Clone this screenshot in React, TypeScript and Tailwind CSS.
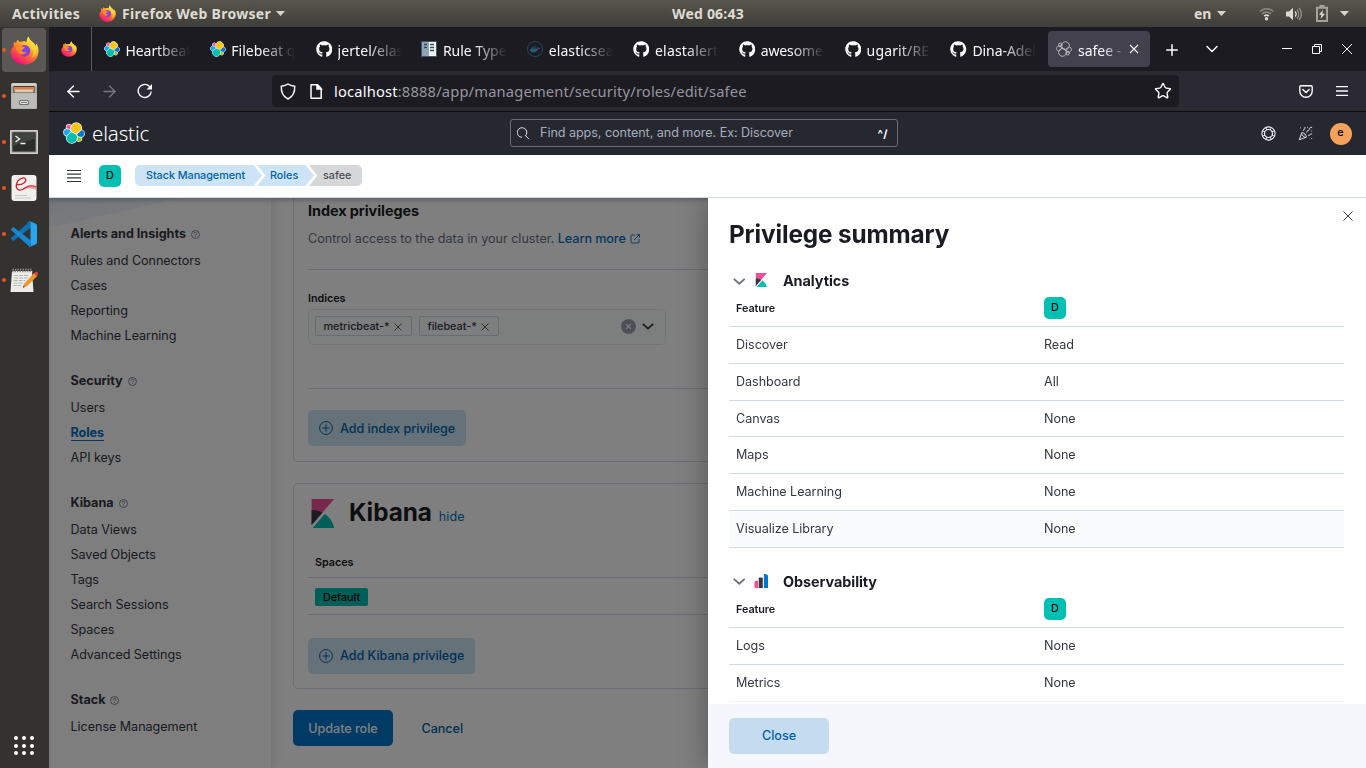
import React from "react";
import { FaGithub, FaDocker } from "react-icons/fa";
import {
  ArrowLeft, ArrowRight, Star, Plus, ChevronDown, PartyPopper,
} from "lucide-react";

const ubuntu = "font-['Noto_Sans',sans-serif]";

function Firefox({ size, id }: { size: number; id: string }) {
  return (
    <svg width={size} height={size} viewBox="0 0 32 32" className="shrink-0">
      <defs>
        <linearGradient id={id + "a"} x1="0.85" y1="0.1" x2="0.3" y2="0.95">
          <stop offset="0" stopColor="#fff44f" />
          <stop offset="0.3" stopColor="#ffc02a" />
          <stop offset="0.6" stopColor="#ff6a34" />
          <stop offset="1" stopColor="#f0127a" />
        </linearGradient>
        <radialGradient id={id + "b"} cx="0.5" cy="0.4" r="0.6">
          <stop offset="0" stopColor="#6f4ff0" />
          <stop offset="0.7" stopColor="#8a3fd0" />
          <stop offset="1" stopColor="#c0349c" />
        </radialGradient>
      </defs>
      <path
        d="M20.500.5c-1.600 2-2.300 4-1.800 6-2-.9-5-1-7.200.2-1.300-.6-2.300-1.500-2.700-2.700-1.200.8-2 2.200-2.100 3.700-.9-.3-1.600-.9-2-1.700-1 2.200-1 4-.6 5.400C1.900 13.600.6 16.200.6 18.300.9 26 7.600 31.500 16 31.500c8.600 0 15.500-6.200 15.500-15 0-3.500-1-6.500-2.900-8.600.2 1.300.1 2.400-.2 3.300C26.900 6.400 21.500 5.800 20.500.5z"
        fill={`url(#${id}a)`}
      />
      <circle cx="16" cy="16.500" r="6.500" fill={`url(#${id}b)`} />
      <path d="M6.500 10.500c3-1.300 5.500-.5 7 1.300 1.300.1 3 .1 3 .9-.5 1.400-3.200 1.700-3.500 3 .2 1.900 2.800 2.800 5.500 1.900-1.700 3.200-6.500 3.700-9.300.8C7 16 6 13 6.500 10.500z" fill="#ff8a2a" />
      <path d="M20.500.5c-1.600 2-2.300 4-1.800 6.200 3 1.800 5.300 5 5 9.300 1.300-.7 1.800-1.600 2-2.400 1.200 4.500 0 8.400-2.200 11 4-2 6.300-6 5.500-12.400C27 6.600 21.500 5.800 20.500.5z" fill="#ffd83c" opacity="0.75" />
    </svg>
  );
}

const elasticPaths: [string, string][] = [
  ["#FEC514", "M12.58 13.787l7.002 3.211 7.066-6.213a7.849 7.849 0 00.152-1.557c0-4.287-3.464-7.774-7.72-7.774-2.548 0-4.917 1.27-6.357 3.39l-1.176 6.13 1.033 2.813z"],
  ["#00BFB3", "M5.333 21.228a7.964 7.964 0 00-.152 1.57c0 4.3 3.486 7.8 7.762 7.8a7.738 7.738 0 006.394-3.404l1.167-6.118-1.556-2.992-7.03-3.222-6.585 6.366z"],
  ["#F04E98", "M5.288 9.067l4.8 1.142L11.14 4.72a3.79 3.79 0 00-2.306-.784 3.818 3.818 0 00-3.803 3.831c0 .45.09.89.257 1.3z"],
  ["#1BA9F5", "M4.872 10.214c-2.145.716-3.646 2.795-3.646 5.057 0 2.204 1.357 4.17 3.394 4.951l6.735-6.124-1.236-2.657-5.247-1.227z"],
  ["#93C90E", "M20.873 27.194a3.76 3.76 0 002.287.783 3.818 3.818 0 003.802-3.832 3.83 3.83 0 00-.253-1.297l-4.794-1.127-1.042 5.473z"],
  ["#0077CC", "M21.848 20.563l5.28 1.238c2.144-.715 3.646-2.795 3.646-5.058 0-2.2-1.36-4.163-3.4-4.942l-6.905 6.072 1.379 2.69z"],
];

function ElasticLogo({ size, outline = false }: { size: number; outline?: boolean }) {
  return (
    <svg width={size} height={size} viewBox="0 0 32 32" className="shrink-0">
      {!outline && elasticPaths.map(([, d]) => <path key={d} d={d} fill="#fff" stroke="#fff" strokeWidth="2" />)}
      {elasticPaths.map(([c, d]) => (
        <path key={d} d={d} fill={outline ? "none" : c} stroke={outline ? "#d8d8de" : "none"} strokeWidth="1.500" />
      ))}
    </svg>
  );
}

function KibanaLogo({ size }: { size: number }) {
  return (
    <svg width={size} height={size} viewBox="0 0 32 32" className="shrink-0">
      <path fill="#F04E98" d="M4 0v28.789L28.935.017z" />
      <path fill="#343741" d="M4 12v16.789l12.007-13.853C12.451 13.063 8.355 12 4 12" />
      <path fill="#00BFB3" d="M18.479 16.664L6.268 30.755 5.161 32h23.772c-1.305-6.261-5.118-11.648-10.454-15.336" />
    </svg>
  );
}

function ObservabilityLogo() {
  return (
    <svg width="14.400" height="14.400" viewBox="0 0 32 32" className="shrink-0">
      <path fill="#F04E98" d="M1 19v9a4 4 0 004 4h4V15H5a4 4 0 00-4 4z" />
      <path fill="#343741" d="M10.500 8h9v24h-9z" />
      <path fill="#0077CC" d="M22 32h10V8a8 8 0 00-8-8h-2z" />
    </svg>
  );
}

const Caret = () => (
  <svg width="9" height="5" viewBox="0 0 9 5" className="shrink-0"><path d="M0 0h9L4.500 5z" fill="#d8d5cd" /></svg>
);

function TopBar() {
  return (
    <header className={`${ubuntu} flex h-[27px] shrink-0 items-center bg-linear-to-b from-[#58554c] to-[#3f3e39] pl-3 text-[14px] leading-[27px] font-bold text-[#dfdbd2]`}>
      <span className="w-[87px] tracking-[0.300px]">Activities</span>
      <Firefox size={17} id="ft" />
      <span className="ml-[6px] w-[150px] tracking-[0.300px] whitespace-nowrap">Firefox Web Browser</span>
      <span className="ml-[4px]"><Caret /></span>
      <span className="ml-[387px] w-[73px] tracking-[0.200px] whitespace-nowrap">Wed 06:43</span>
      <span className="ml-[449px] w-[18px]">en</span>
      <span className="ml-[5px]"><Caret /></span>
      <svg className="ml-[33px]" width="15" height="14" viewBox="0 0 15 14" fill="none" strokeWidth="1.700">
        <path d="M.8 4.500C4.600.8 10.400.8 14.200 4.500M3 7c2.600-2.500 6.400-2.500 9 0" stroke="#8d8b84" />
        <path d="M5.200 9.200c1.400-1.200 3.200-1.200 4.600 0" stroke="#dfdbd2" />
        <circle cx="7.500" cy="11.800" r="1.700" fill="#dfdbd2" />
      </svg>
      <svg className="ml-[12px]" width="16" height="14" viewBox="0 0 16 14" fill="none">
        <path d="M0 4.500h3L7 .8v12.400L3 9.500H0z" fill="#dfdbd2" />
        <path d="M9 4.500c1.300 1.400 1.300 3.600 0 5" stroke="#dfdbd2" strokeWidth="1.300" />
        <path d="M11 2.700c2.300 2.500 2.300 6.100 0 8.600M13 1c3.200 3.500 3.200 8.500 0 12" stroke="#8d8b84" strokeWidth="1.400" />
      </svg>
      <svg className="ml-[14px]" width="12" height="17" viewBox="0 0 12 17">
        <path d="M1 2.700h10V16H1z" fill="none" stroke="#a5a29a" strokeWidth="2" />
        <path d="M3.500 0h5v3h-5z" fill="#a5a29a" />
        <path d="M6.800 5L3 9.700h2.400L4.600 14 9 8.700H6.500z" fill="#dfdbd2" />
      </svg>
      <span className="ml-[12px]"><Caret /></span>
    </header>
  );
}

function FilesIcon() {
  return (
    <svg width="28" height="28" viewBox="0 0 28 28">
      <rect x="1" y="1" width="26" height="26" rx="1.500" fill="#a7a7a5" />
      <path d="M1 4l1.500-3h23L27 4z" fill="#cfcfcd" />
      <rect x="3.500" y="4" width="21" height="7" fill="#4a3a31" />
      <rect x="4" y="5" width="20" height="3" fill="#e07c45" />
      <rect x="4.500" y="7.500" width="19" height="3" fill="#d9cbb4" />
      <rect x="1.500" y="11" width="25" height="15.500" fill="#bcbcba" />
      <rect x="9" y="18" width="10" height="5" rx="1.500" fill="#6c6c6a" />
      <rect x="10" y="19" width="8" height="3" rx="1" fill="#e3e3e1" />
      <rect x="11" y="20" width="6" height="1" fill="#777" />
    </svg>
  );
}
function TerminalIcon() {
  return (
    <svg width="28" height="24" viewBox="0 0 28 24">
      <rect x="0" y="0" width="28" height="24" rx="1" fill="#d0d0ce" />
      <rect x="1.500" y="1.500" width="25" height="21" fill="#8e8e8c" />
      <rect x="2.500" y="2.500" width="23" height="19" fill="#2b2d2b" />
      <path d="M2.500 2.500h23v6L2.500 16z" fill="#40433f" />
      <path d="M5.500 6l4 3-4 3M10.500 13.500h5" stroke="#f1f1f1" strokeWidth="1.300" fill="none" />
    </svg>
  );
}
function ReaderIcon() {
  return (
    <svg width="26" height="28" viewBox="0 0 26 28">
      <rect x="0.500" y="1" width="25" height="26" rx="3" fill="#efefed" />
      <path d="M4 21.500h12M4 24h16" stroke="#c9c9c7" strokeWidth="1" />
      <path d="M5.500 10.500C11 11.500 16 8 14.500 5 13 2.500 7 4.500 5.500 10c-1.200 4.800 2 7.600 6.500 5.200 3.500-2 6-4.600 13.500-2.400" stroke="#cf2027" strokeWidth="1.200" fill="none" />
      <path d="M14 14.500c3-2.600 7-4 11.500-2.400v4c-3.500-1.800-7-2.400-11.500-1.600z" fill="#e2686b" opacity="0.600" />
    </svg>
  );
}
function CodeIcon() {
  return (
    <svg width="26" height="26" viewBox="0 0 26 26">
      <path d="M18.800 0L20 6.500 3 19.500c-.5.400-1 .3-1.500 0L.4 18.300c-.5-.5-.5-1.200 0-1.600z" fill="#0f70b3" />
      <path d="M18.800 26L20 19.500 3 6.500c-.5-.4-1-.3-1.500 0L.4 7.700c-.5.500-.5 1.200 0 1.600z" fill="#1a86cf" />
      <path d="M18.800 26c-.6.100-.9-.1-1.200-.4.800.6 1.900.1 1.900-.9V1.300c0-1-1.100-1.500-1.900-.8.400-.5 1-.6 1.600-.3l5.600 2.600c.7.300 1.200 1 1.200 1.700v17c0 .8-.5 1.400-1.200 1.800z" fill="#27a5f2" />
    </svg>
  );
}
function EditorIcon() {
  return (
    <svg width="28" height="25" viewBox="0 0 28 25">
      <path d="M2 3h20l1.500 21H.5z" fill="#ececea" />
      <path d="M2.500 1.500H22M2 3.500h20.500" stroke="#8d8d8b" strokeWidth="1.500" strokeDasharray="1.500 1" />
      <path d="M4 7.500h15M4 10h14M3.500 12.500h12M3.500 15h10M3 17.500h8" stroke="#b5b5b3" strokeWidth="1" strokeDasharray="4 1" />
      <path d="M24 5l3.500 2.800L17 18.200l-4 1.500 1-3.700z" fill="#f0952c" />
      <path d="M24 5l1.500-1.300c1.500-.3 2.800 1 2.400 2.500L26.700 8.500z" fill="#e23b3b" />
      <path d="M13 19.700l.6-1.900 1.300 1z" fill="#333" />
    </svg>
  );
}

function Dock() {
  const items = [<FilesIcon />, <TerminalIcon />, <ReaderIcon />, <CodeIcon />, <EditorIcon />];
  return (
    <nav className="flex w-[49px] shrink-0 flex-col bg-[#33322e]">
      <div className="flex h-[46px] items-center pl-[2px]">
        <div className="flex h-[44px] w-[44px] items-center rounded-[4px] bg-[#595854]">
          <span className="mr-[4px] h-1 w-1 shrink-0 rounded-full bg-[#e95420]" />
          <Firefox size={29} id="fd" />
        </div>
      </div>
      {items.map((icon, i) => (
        <div key={i} className="flex h-[46px] items-center pl-[2px]">
          <span className="h-1 w-1 rounded-full bg-[#e95420]" />
          <span className="flex w-[36px] justify-center">{icon}</span>
        </div>
      ))}
      <div className="mt-auto mb-[13px] ml-[14px] grid w-[20px] grid-cols-3 gap-[3.500px]">
        {Array.from({ length: 9 }, (_, i) => <span key={i} className="h-[4px] w-[4px] rounded-full bg-white" />)}
      </div>
    </nav>
  );
}

const RuleIcon = () => (
  <svg width="16" height="16" viewBox="0 0 16 16" className="shrink-0">
    <path d="M0 0h16v16H0z" fill="#3f5866" />
    <path d="M1 1h6v14H1z" fill="#8ca6b5" /><path d="M7.500 1H15v14H7.500z" fill="#f3f6f8" />
    <path d="M3 3.500h3M3 6.500h3M9 3.500h4M9 6.500h4M9 9.500h4" stroke="#34495a" strokeWidth="1.500" />
  </svg>
);
const DockerIcon = () => (
  <span className="flex h-4 w-4 shrink-0 items-center justify-center rounded-full border border-[#234a5e]">
    <FaDocker size={10} color="#2a5a74" />
  </span>
);
const Gh = () => <FaGithub size={16.500} color="#fff" className="shrink-0" />;

const tabs: [React.ReactNode, string, string][] = [
  [<ElasticLogo size={16} />, "Heartbeat", "tracking-[-0.080px]"],
  [<ElasticLogo size={16} />, "Filebeat q", "tracking-[0px]"],
  [<Gh />, "jertel/elas", "tracking-[0.060px]"],
  [<RuleIcon />, "Rule Type", "tracking-[0px]"],
  [<DockerIcon />, "elasticsea", "tracking-[0.100px]"],
  [<Gh />, "elastalert", "tracking-[0.200px]"],
  [<Gh />, "awesome-", "tracking-[-0.150px]"],
  [<Gh />, "ugarit/RE", "tracking-[0.150px]"],
  [<Gh />, "Dina-Adel", "tracking-[-0.060px]"],
];

function TabStrip() {
  return (
    <div className={`${ubuntu} flex h-[44px] shrink-0 items-center bg-[#1c1b22] text-[14px] text-[#fbfbfe]`}>
      <div className="flex h-full w-[43px] items-center justify-center border-r border-[#5b5a63] pr-[2px]">
        <Firefox size={16} id="fp" />
      </div>
      <div className="w-[2px]" />
      {tabs.map(([icon, t, tracking]) => (
        <div key={t} className="flex w-[105.800px] shrink-0 items-center pl-[10px]">
          {icon}
          <span className={`relative top-[1px] ml-[5.500px] w-[66px] whitespace-nowrap [mask-image:linear-gradient(to_right,#000_45%,transparent_97%)] ${tracking}`}>{t}</span>
        </div>
      ))}
      <div className="ml-[1.800px] flex h-9 w-[102px] shrink-0 items-center rounded-[4px] bg-[#42414d] pl-2">
        <ElasticLogo size={16} outline />
        <span className="relative top-[1px] ml-[6px] w-[49px] whitespace-nowrap [mask-image:linear-gradient(to_right,#000_50%,transparent)]">safee -</span>
        <svg width="10" height="10" viewBox="0 0 10 10" className="ml-[2px]"><path d="M1 1l8 8M9 1L1 9" stroke="#fbfbfe" strokeWidth="1.100" /></svg>
      </div>
      <Plus size={18} strokeWidth={2} className="mt-[1px] ml-[13px] shrink-0" />
      <ChevronDown size={20} strokeWidth={1.700} className="ml-[21px] shrink-0" />
      <svg className="ml-[60px] shrink-0" width="72" height="12" viewBox="0 0 72 12" fill="none" stroke="#fbfbfe" strokeWidth="1">
        <path d="M0 5.500h10M30.500 3.500h7v7h-7zM32.500 3.500v-2h7v7h-2M60 1l10 10M70 1L60 11" />
      </svg>
    </div>
  );
}

function UrlBar() {
  return (
    <div className={`${ubuntu} flex h-[41px] shrink-0 items-center border-b border-[#0c0c0d] bg-[#2b2a33] text-[#fbfbfe]`}>
      <ArrowLeft size={19} strokeWidth={1.700} className="ml-[14.500px]" />
      <ArrowRight size={19} strokeWidth={1.700} className="ml-[17px] text-[#77767e]" />
      <svg width="16" height="16" viewBox="0 0 16 16" className="ml-[18.500px]" fill="none" stroke="#fbfbfe" strokeWidth="1.400">
        <path d="M14.200 8.500A6.500 6.500 0 1112.500 3.500l1.500 1.500" /><path d="M15 1v5.500H9.500z" fill="#fbfbfe" stroke="none" />
      </svg>
      <div className="ml-[119px] flex h-[32px] w-[907px] items-center rounded-[4px] bg-[#1c1b22]">
        <svg className="ml-[8px]" width="16" height="17" viewBox="0 0 16 17" fill="none" stroke="#fbfbfe" strokeWidth="1.400">
          <path d="M8 1C6 2.500 3.500 3 1.300 3.200 1 8.500 3 13.500 8 16c5-2.500 7-7.500 6.700-12.800C12.500 3 10 2.500 8 1z" />
        </svg>
        <svg className="ml-[13px]" width="14" height="15" viewBox="0 0 14 15" fill="none" stroke="#fbfbfe" strokeWidth="1.500">
          <path d="M2 .8h6.500l3.700 3.700v9.700H2z" strokeLinejoin="round" /><path d="M8 1v4h4z" fill="#fbfbfe" />
        </svg>
        <span className="ml-[11px] flex-1 text-[14.700px] tracking-[0.180px] whitespace-nowrap text-[#97969f]">
          <span className="text-[#fbfbfe]">localhost</span>:8888/app/management/security/roles/edit/safee
        </span>
        <Star size={18} strokeWidth={1.900} className="mr-[7px]" />
      </div>
      <svg className="ml-[120px]" width="14" height="13" viewBox="0 0 14 13" fill="none" stroke="#fbfbfe" strokeWidth="1.400">
        <path d="M2 .8h10c.7 0 1.200.5 1.200 1.200V6A6.200 6.200 0 01.8 6V2C.8 1.300 1.300.8 2 .8z" /><path d="M3.800 4.500L7 7.500l3.200-3" strokeLinecap="round" />
      </svg>
      <svg className="ml-[23px]" width="12" height="10" viewBox="0 0 12 10"><path d="M0 .7h12M0 5h12M0 9.300h12" stroke="#fbfbfe" strokeWidth="1.300" /></svg>
    </div>
  );
}

function KibanaHeader() {
  return (
    <div className="flex h-[43px] shrink-0 items-center bg-[#25282f]">
      <span className="ml-[14px] pb-[1px]"><ElasticLogo size={22} /></span>
      <span className="ml-[7px] w-[60px] pb-[2px] font-['Noto_Sans',sans-serif] text-[20.500px] leading-[28px] font-light tracking-[-0.150px] text-white">elastic</span>
      <div className="mb-[1px] ml-[358px] flex h-[28px] w-[388px] items-center rounded-[3px] border border-[#696c72]">
        <svg className="ml-[6px] shrink-0" width="13" height="13" viewBox="0 0 13 13" fill="none" stroke="#dfe5ef" strokeWidth="1">
          <path d="M5 10.300a4.800 4.800 0 11 3.200-1.200M8.500 8.700l3.500 3.500" />
        </svg>
        <span className="ml-[10px] flex-1 text-[12.600px] tracking-[-0.050px] text-[#a5adbc]">Find apps, content, and more. Ex: Discover</span>
        <span className="mt-[2px] mr-[9px] text-[11px] font-bold tracking-[0.500px] text-white">^/</span>
      </div>
      <svg width="15" height="15" viewBox="0 0 15 15" className="ml-[363px]" fill="none" stroke="#eef1f6">
        <circle cx="7.500" cy="7.500" r="6.600" strokeWidth="1.100" /><circle cx="7.500" cy="7.500" r="4" strokeWidth="1.100" />
        <path d="M2 5l2.200.8M5 2l.8 2.200M13 5l-2.200.8M10 2l-.8 2.200M2 10l2.200-.8M5 13l.8-2.200M13 10l-2.200-.8M10 13l-.8-2.200" />
      </svg>
      <PartyPopper size={15} strokeWidth={1.600} className="ml-[22px] text-[#dfe5ef]" />
      <span className="ml-[16.500px] flex h-[22px] w-[22px] items-center justify-center rounded-full bg-[#f5a35c] text-[10.800px] font-medium text-black">e</span>
    </div>
  );
}

const SpaceBadge = () => (
  <span className="flex h-[22px] w-[21.600px] shrink-0 items-center justify-center rounded-[5px] bg-[#00bfb3] pt-[1px] text-[10.800px] font-medium text-black">D</span>
);

function Breadcrumbs() {
  return (
    <div className="flex h-[43px] shrink-0 items-center border-b border-[#d3dae6] bg-white">
      <svg className="ml-[18px]" width="14" height="12" viewBox="0 0 14 12"><path d="M0 .5h14M0 4.200h14M0 7.800h14M0 11.500h14" stroke="#343741" strokeWidth="1.200" /></svg>
      <span className="ml-[18px]"><SpaceBadge /></span>
      <div className="mb-[1px] ml-[14.400px] flex h-[21px] text-[10.800px] leading-[21px] font-medium">
        <span className="w-[127px] rounded-l-[5px] bg-[#cce4f5] pl-[11px] tracking-[-0.040px] text-[#0061a6] [clip-path:polygon(0_0,118.500px_0,100%_50%,118.500px_100%,0_100%)]">Stack Management</span>
        <span className="-ml-[5px] w-[57px] bg-[#cce4f5] pl-[13px] text-[#0061a6] [clip-path:polygon(0_0,48.500px_0,100%_50%,48.500px_100%,0_100%,8.500px_50%)]">Roles</span>
        <span className="-ml-[5px] w-[53px] rounded-r-[5px] bg-[#d6d7d9] pl-[14px] text-[#4a4d56] [clip-path:polygon(0_0,100%_0,100%_100%,0_100%,8.500px_50%)]">safee</span>
      </div>
    </div>
  );
}

const sections: [string, string[]][] = [
  ["Alerts and Insights", ["Rules and Connectors", "Cases", "Reporting", "Machine Learning"]],
  ["Security", ["Users", "Roles", "API keys"]],
  ["Kibana", ["Data Views", "Saved Objects", "Tags", "Search Sessions", "Spaces", "Advanced Settings"]],
  ["Stack", ["License Management"]],
];

function Sidebar() {
  return (
    <aside className="relative w-[223px] shrink-0 border-r border-[#eceef3] bg-[#fcfcfd] pt-[24px] pl-[21.500px] text-[12.600px] tracking-[-0.050px] shadow-[0_0_12px_rgba(0,0,0,0.15)]">
      <svg className="absolute top-0 left-0" width="140" height="32" viewBox="0 0 140 32"><path d="M0 0h131L0 30z" fill="#f1f3fa" /><path d="M0 0h80L0 14z" fill="#ebeef8" /></svg>
      {sections.map(([title, links]) => (
        <div key={title} className="relative mb-5">
          <div className="mb-[2px] flex h-[25px] items-center font-bold tracking-[0px] text-[#343741]">
            {title}
            <svg className="mb-[1px] ml-[5px]" width="9" height="9" viewBox="0 0 9 9" fill="none" stroke="#69707d" strokeWidth="0.800">
              <circle cx="4.500" cy="4.500" r="4" /><path d="M3.200 3.500c0-1.700 2.600-1.500 2.600 0 0 .9-1.300.9-1.300 1.900M4.500 6.200v.8" />
            </svg>
          </div>
          {links.map((l) => (
            <div key={l} className="flex h-[25px] items-center">
              {l === "Roles"
                ? <span className="-mt-[1px] border-b border-[#0071c2] leading-[15px] font-bold text-[#0071c2]">{l}</span>
                : <span className="text-[#343741]">{l}</span>}
            </div>
          ))}
        </div>
      ))}
    </aside>
  );
}

const PlusCircle = () => (
  <svg width="14" height="14" viewBox="0 0 14 14" fill="none" stroke="#0061a6" strokeWidth="1"><circle cx="7" cy="7" r="6.400" /><path d="M7 3.300v7.400M3.300 7h7.400" /></svg>
);

function SoftButton({ label, width, shift }: { label: string; width: string; shift: string }) {
  return (
    <button className={`flex h-9 items-center gap-[7.500px] rounded-[5px] bg-[#cce4f5] pl-[10.500px] text-[12.600px] font-medium tracking-[-0.040px] whitespace-nowrap text-[#0061a6] ${width}`}>
      <PlusCircle /><span className={shift}>{label}</span>
    </button>
  );
}

const Cross = ({ color = "#343741", className = "" }: { color?: string; className?: string }) => (
  <svg width="8" height="8" viewBox="0 0 8 8" className={className}><path d="M.5.5l7 7M7.500.5l-7 7" stroke={color} strokeWidth="0.800" /></svg>
);

function Pill({ label, width }: { label: string; width: string }) {
  return (
    <span className={`flex h-5 items-center justify-between rounded-[2px] border border-[#d3dae6] pr-[9px] pl-[7.500px] text-[10.800px] font-medium text-[#343741] ${width}`}>
      <span className="relative top-[1px]">{label}</span><Cross className="mt-[2px]" />
    </span>
  );
}

function Main() {
  return (
    <main className="w-[1072px] shrink-0 bg-white pr-4 pl-[21px] text-[12.600px] text-[#343741]">
      <section className="h-[264px] rounded-b-[5px] border border-t-0 border-[#d3dae6] px-[14px]">
        <h3 className="h-[27px] text-[14.400px] leading-[25px] font-bold tracking-[-0.050px] text-[#1a1c21]">Index privileges</h3>
        <p className="flex h-[28px] items-center tracking-[-0.020px] text-[#69707d]">
          Control access to the data in your cluster.
          <a className="ml-[3.500px] font-medium tracking-[-0.060px] text-[#0071c2]">Learn more</a>
          <svg className="ml-[4px]" width="10" height="10" viewBox="0 0 10 10" fill="none" stroke="#0071c2" strokeWidth="0.900"><path d="M5 1H2a1 1 0 00-1 1v6a1 1 0 001 1h6a1 1 0 001-1V5M4 6l5-5M6.500.6h3v3" /></svg>
        </p>
        <div className="mt-[16px] border-t border-[#d3dae6]" />
        <div className="pt-[21px] text-[10.800px] leading-[15px] font-semibold tracking-[-0.050px] text-[#1a1c21]">Indices</div>
        <div className="mt-[3px] flex h-9 w-[358px] items-center gap-[7px] rounded-[5px] border border-[#e5e9f2] bg-[#fbfcfd] pb-[2px] pl-[6px]">
          <Pill label="metricbeat-*" width="w-[97px]" />
          <Pill label="filebeat-*" width="w-[80px]" />
          <span className="mt-[1px] ml-auto flex h-[15px] w-[15px] items-center justify-center rounded-full bg-[#98a2b3]">
            <svg width="5" height="5" viewBox="0 0 5 5"><path d="M0 0l5 5M5 0L0 5" stroke="#fff" strokeWidth="1.200" /></svg>
          </span>
          <svg className="mt-[1px] mr-[11px] -ml-[1px]" width="12" height="7" viewBox="0 0 12 7"><path d="M.8.8L6 5.700 11.200.8" fill="none" stroke="#343741" strokeWidth="1.600" /></svg>
        </div>
        <div className="mt-[43px] mb-[21px] border-t border-[#d3dae6]" />
        <SoftButton label="Add index privilege" width="w-[158px]" shift="mt-[2px]" />
      </section>
      <section className="mt-[21px] h-[206px] rounded-[5px] border border-[#d3dae6] px-[14px] pt-[15px]">
        <div className="flex h-[29px] items-center">
          <KibanaLogo size={29} />
          <h2 className="-mt-[2px] ml-[12px] text-[24.300px] font-bold tracking-[-0.050px] text-[#1a1c21]">Kibana</h2>
          <a className="mt-[7px] ml-[7px] tracking-[0.060px] text-[#0071c2]">hide</a>
        </div>
        <div className="mt-[19px] flex h-[31px] items-center border-b border-[#d3dae6] pt-[2px] pl-[7px] text-[10.800px] font-semibold tracking-[-0.050px] text-[#1a1c21]">Spaces</div>
        <div className="flex h-[37px] items-center border-b border-[#d3dae6] pl-[7px]">
          <span className="mt-[2px] flex h-[18px] w-[53px] items-center justify-center rounded-[2px] bg-[#00bfb3] pt-[2px] text-[10.800px] font-medium text-black">Default</span>
        </div>
        <div className="mt-[23px]"><SoftButton label="Add Kibana privilege" width="w-[167px]" shift="mt-[1px]" /></div>
      </section>
      <div className="mt-[21px] flex items-center font-medium tracking-[-0.040px]">
        <button className="h-9 w-[100px] rounded-[5px] bg-[#0077cc] pt-[2px] text-white">Update role</button>
        <a className="mt-[2px] ml-[28.500px] text-[#0061a6]">Cancel</a>
      </div>
    </main>
  );
}

const groups: { title: string; icon: React.ReactNode; rows: [string, string][] }[] = [
  {
    title: "Analytics",
    icon: <KibanaLogo size={14.4} />,
    rows: [["Discover", "Read"], ["Dashboard", "All"], ["Canvas", "None"], ["Maps", "None"], ["Machine Learning", "None"], ["Visualize Library", "None"]],
  },
  { title: "Observability", icon: <ObservabilityLogo />, rows: [["Logs", "None"], ["Metrics", "None"]] },
];

function Flyout() {
  return (
    <div className="absolute inset-y-0 right-0 flex w-[658px] flex-col bg-white shadow-[0_0_28px_rgba(0,0,0,0.35)]">
      <svg width="10" height="10" viewBox="0 0 10 10" className="absolute top-[13px] right-[13px]"><path d="M.5.5l9 9M9.500.5l-9 9" stroke="#343741" strokeWidth="1" /></svg>
      <div className="min-h-0 flex-1 overflow-hidden px-[21px] pr-[22px] [mask-image:linear-gradient(to_bottom,#000_calc(100%-7px),transparent)]">
        <h2 className="h-[73px] pt-[18px] text-[24.300px] leading-[36px] font-bold tracking-[-0.120px] text-[#1a1c21]">Privilege summary</h2>
        {groups.map((g) => (
          <section key={g.title} className="mb-[23.900px] text-[12.600px] tracking-[-0.050px] text-[#343741]">
            <div className="flex h-[19px] items-center">
              <svg className="mt-[1px] mr-[8px] ml-[4px]" width="12.500" height="7" viewBox="0 0 12.500 7"><path d="M.8.8l5.450 4.900L11.700.8" fill="none" stroke="#69707d" strokeWidth="1.800" /></svg>
              <span className="mb-[1px]">{g.icon}</span>
              <h3 className="ml-[15px] text-[14.400px] font-bold text-[#1a1c21]">{g.title}</h3>
            </div>
            <div className="flex h-[37px] items-center border-b border-[#d3dae6] pl-[7px] text-[10.800px] font-semibold text-[#1a1c21]">
              <span className="w-[308px] pt-[2px]">Feature</span><SpaceBadge />
            </div>
            {g.rows.map(([f, v], i) => (
              <div key={f} className={`flex items-center border-b border-[#d3dae6] pt-[1.300px] pl-[7px] ${i === 2 ? "h-[36px]" : i === 5 ? "h-[37.100px]" : "h-[37px]"} ${f === "Visualize Library" ? "bg-[#fafbfd]" : ""}`}>
                <span className="w-[308px]">{f}</span><span>{v}</span>
              </div>
            ))}
          </section>
        ))}
      </div>
      <div className="flex h-[64px] shrink-0 items-center bg-[#f5f7fc] pl-[21px]">
        <button className="h-9 w-[100px] rounded-[5px] bg-[#c5dcf0] text-[12.600px] font-medium text-[#0061a6]">Close</button>
      </div>
    </div>
  );
}

export default function App() {
  return (
    <div className="flex h-[768px] w-[1366px] flex-col overflow-hidden font-['Inter',sans-serif]">
      <TopBar />
      <div className="flex min-h-0 flex-1">
        <Dock />
        <div className="flex min-w-0 flex-1 flex-col">
          <TabStrip />
          <UrlBar />
          <KibanaHeader />
          <Breadcrumbs />
          <div className="relative flex min-h-0 flex-1 overflow-hidden">
            <Sidebar />
            <Main />
            <div className="absolute inset-0 bg-black/50 shadow-[inset_0_4px_5px_-2px_rgba(0,0,0,0.25)]" />
            <Flyout />
          </div>
        </div>
      </div>
    </div>
  );
}
